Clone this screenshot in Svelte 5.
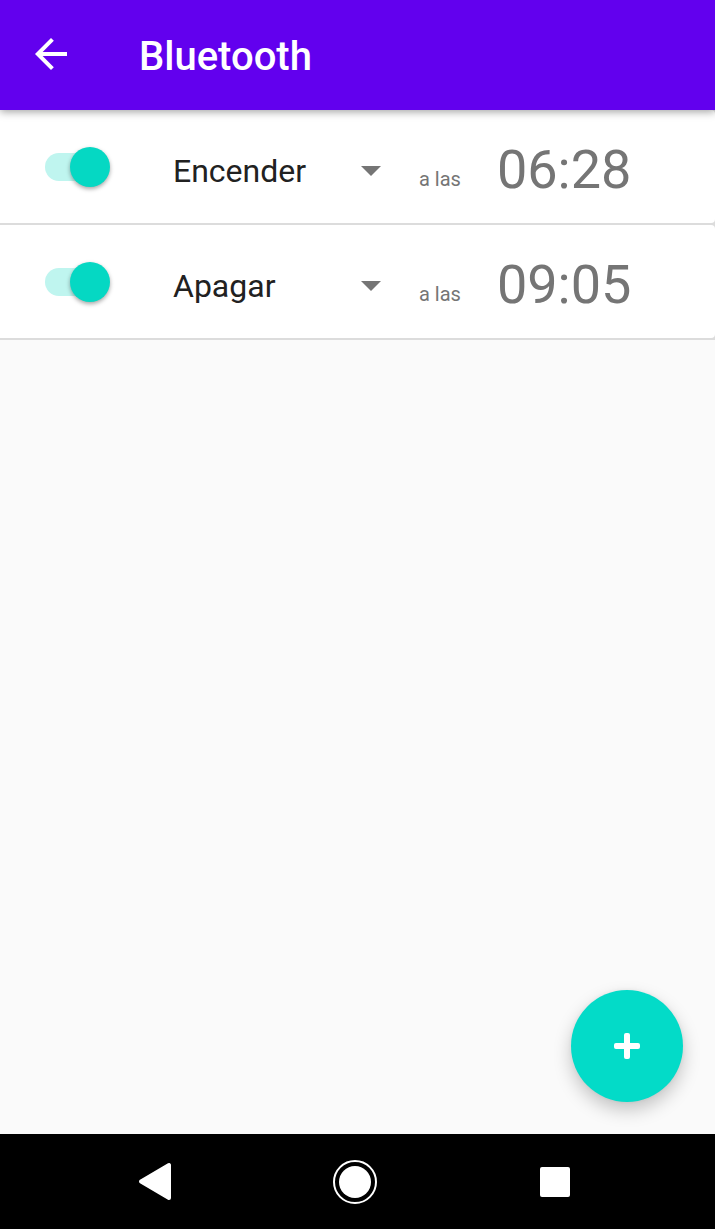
<script>
  let alarms = $state([
    { id: 1, enabled: true, action: 'Encender', time: '06:28' },
    { id: 2, enabled: true, action: 'Apagar', time: '09:05' }
  ]);

  function addAlarm() {
    alarms.push({ id: alarms.length + 1, enabled: true, action: 'Encender', time: '12:00' });
  }
</script>

<div class="screen">
  <header>
    <button class="back" aria-label="Atrás">
      <svg width="48" height="48" viewBox="0 0 24 24" aria-hidden="true">
        <path fill="#fff" d="M20 11H7.83l5.59-5.59L12 4l-8 8 8 8 1.41-1.41L7.83 13H20v-2z" />
      </svg>
    </button>
    <h1>Bluetooth</h1>
  </header>

  <main>
    <ul>
      {#each alarms as alarm (alarm.id)}
        <li>
          <input class="switch" type="checkbox" role="switch" aria-label="Activar" bind:checked={alarm.enabled} />
          <div class="spinner">
            <select aria-label="Acción" bind:value={alarm.action}>
              <option>Encender</option>
              <option>Apagar</option>
            </select>
            <svg width="20" height="10" viewBox="0 0 20 10" aria-hidden="true">
              <path fill="#757575" d="M0 0h20L10 10z" />
            </svg>
          </div>
          <span class="at">a las</span>
          <button class="time">{alarm.time}</button>
        </li>
      {/each}
    </ul>
    <button class="fab" aria-label="Añadir" onclick={addAlarm}>
      <svg width="26" height="26" viewBox="0 0 26 26" aria-hidden="true">
        <rect x="10" y="0" width="6" height="26" rx="2" fill="#fff" />
        <rect x="0" y="10" width="26" height="6" rx="2" fill="#fff" />
      </svg>
    </button>
  </main>

  <nav aria-label="Sistema">
    <button aria-label="Volver">
      <svg width="44" height="44" viewBox="0 0 44 44" aria-hidden="true">
        <path fill="#fff" stroke="#fff" stroke-width="4" stroke-linejoin="round" d="M8 21.5L36 5v33z" />
      </svg>
    </button>
    <button aria-label="Inicio">
      <svg width="44" height="44" viewBox="0 0 44 44" aria-hidden="true">
        <circle cx="22" cy="22" r="21" fill="none" stroke="#fff" stroke-width="2" />
        <circle cx="22" cy="22" r="16" fill="#fff" />
      </svg>
    </button>
    <button aria-label="Recientes">
      <svg width="44" height="44" viewBox="0 0 44 44" aria-hidden="true">
        <rect x="7" y="7" width="30" height="30" rx="2" fill="#fff" />
      </svg>
    </button>
  </nav>
</div>

<style>
  :global(body) {
    margin: 0;
  }

  .screen {
    display: flex;
    flex-direction: column;
    min-height: 100vh;
    background: #fafafa;
    font-family: Roboto, sans-serif;
  }

  button {
    display: flex;
    align-items: center;
    justify-content: center;
    margin: 0;
    padding: 0;
    border: 0;
    background: none;
    color: inherit;
    font: inherit;
    cursor: pointer;
  }

  header {
    z-index: 1;
    display: flex;
    align-items: center;
    gap: 64px;
    height: 108px;
    padding: 0 27px 2px;
    background: #6200ee;
    box-shadow: 0 2px 8px rgba(0, 0, 0, 0.36);
    color: #fff;
  }

  h1 {
    margin: 0;
    padding-top: 6px;
    font-size: 40px;
    font-weight: 500;
    line-height: 48px;
  }

  main {
    position: relative;
    flex: 1;
  }

  ul {
    display: flow-root;
    margin: 0;
    padding: 0;
    background: #dcdcdc;
    list-style: none;
  }

  li {
    display: flex;
    align-items: center;
    height: 113px;
    margin-bottom: 2px;
    padding: 0 45px;
    border-radius: 0 4px 4px 0;
    background: #fff;
  }

  .switch {
    position: relative;
    flex: none;
    appearance: none;
    width: 65px;
    height: 40px;
    margin: 0;
    cursor: pointer;
  }

  .switch::before {
    content: '';
    position: absolute;
    inset: 6px 4px 6px 0;
    border-radius: 14px;
    background: #bdbdbd;
  }

  .switch::after {
    content: '';
    position: absolute;
    top: 0;
    left: 0;
    width: 40px;
    height: 40px;
    border-radius: 50%;
    background: #f1f1f1;
    box-shadow: 0 2px 4px rgba(0, 0, 0, 0.35);
  }

  .switch:checked::before {
    background: #bff5ef;
  }

  .switch:checked::after {
    left: 25px;
    background: #05d8c3;
  }

  .spinner {
    display: flex;
    align-items: center;
    width: 208px;
    margin-left: 63px;
    padding-top: 8px;
  }

  select {
    flex: 1;
    min-width: 0;
    appearance: none;
    margin: 0;
    padding: 0;
    border: 0;
    background: none;
    color: #212121;
    font: 32px/40px Roboto, sans-serif;
  }

  .at {
    margin-left: 38px;
    padding-top: 24px;
    color: #757575;
    font-size: 20px;
    line-height: 24px;
  }

  .time {
    margin-left: 36px;
    padding-top: 6px;
    color: #757575;
    font-size: 54px;
    line-height: 64px;
  }

  .fab {
    position: absolute;
    right: 32px;
    bottom: 32px;
    width: 112px;
    height: 112px;
    border-radius: 50%;
    background: #03dbc8;
    box-shadow: 0 8px 18px rgba(0, 0, 0, 0.22), 0 0 4px rgba(0, 0, 0, 0.06);
  }

  nav {
    display: flex;
    justify-content: center;
    height: 95px;
    padding-right: 5px;
    background: #000;
  }

  nav button {
    width: 200px;
  }
</style>
